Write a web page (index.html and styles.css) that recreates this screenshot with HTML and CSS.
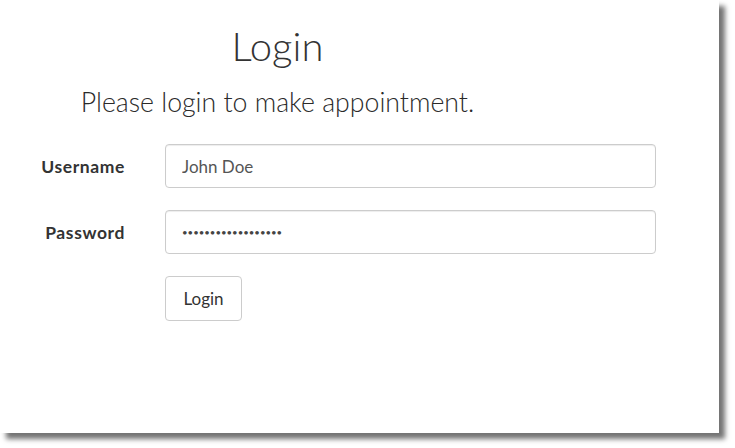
FILE: index.html
```html
<!DOCTYPE html>
<html>
<head>
<meta charset="utf-8">
<link rel="stylesheet" href="styles.css">
</head>
<body>
<div class="panel">
  <div class="header">
    <h1 class="title">Login</h1>
    <p class="lead">Please login to make appointment.</p>
  </div>
  <form class="form">
    <div class="row">
      <label class="label">Username</label>
      <input class="input" type="text" value="John Doe">
    </div>
    <div class="row">
      <label class="label">Password</label>
      <input class="input input-pass" type="password" value="ThisIsNotAPassword">
    </div>
    <div class="row">
      <span class="label"></span>
      <button class="btn" type="button">Login</button>
    </div>
  </form>
</div>
</body>
</html>
```
FILE: styles.css
```css
html, body {
  margin: 0;
  padding: 0;
  background: #fff;
}
body {
  font-family: "Lato", "Open Sans", sans-serif;
  color: #333;
  min-height: 448px;
}
.panel {
  width: 719px;
  height: 433px;
  background: #fff;
  box-shadow: 6px 6px 5px rgba(0, 0, 0, 0.55);
  box-sizing: border-box;
  padding-top: 22px;
}
.header {
  width: 555px;
  text-align: center;
}
.title {
  margin: 0;
  font-size: 40px;
  font-weight: 300;
  line-height: 48px;
  color: #333;
}
.lead {
  margin: 16px 0 0;
  font-size: 26.7px;
  font-weight: 300;
  line-height: 32px;
  color: #2a2a2a;
}
.form {
  margin-top: 26px;
  display: flex;
  flex-direction: column;
  gap: 22px;
}
.row {
  display: flex;
  align-items: center;
}
.label {
  width: 125px;
  box-sizing: border-box;
  text-align: right;
  font-size: 17.5px;
  font-weight: 700;
  letter-spacing: 0.6px;
  color: #333;
  margin-right: 40px;
}
.input {
  width: 491px;
  height: 44px;
  box-sizing: border-box;
  border: 1px solid #ccc;
  border-radius: 4px;
  padding: 0 16px;
  font-family: "Lato", sans-serif;
  font-size: 17px;
  color: #555;
  box-shadow: inset 0 1px 1px rgba(0, 0, 0, 0.075);
  outline: none;
}
.input-pass {
  font-size: 9.6px;
  letter-spacing: 0;
  color: #444;
}
.btn {
  width: 77px;
  height: 45px;
  box-sizing: border-box;
  border: 1px solid #ccc;
  border-radius: 4px;
  background: #fff;
  font-family: "Lato", sans-serif;
  font-size: 17px;
  color: #333;
  padding: 0;
}
```
